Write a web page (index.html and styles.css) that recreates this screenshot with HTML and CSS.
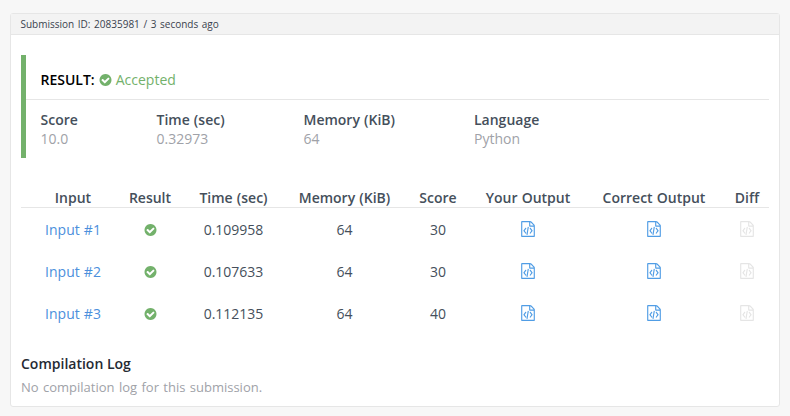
FILE: index.html
```html
<!DOCTYPE html>
<html lang="en">
<head>
<meta charset="utf-8">
<title>Submission</title>
<link rel="stylesheet" href="styles.css">
</head>
<body>
<svg class="sprite" aria-hidden="true">
  <symbol id="check" viewBox="128 128 1536 1536"><path d="M1412 734q0-28-18-46l-91-90q-19-19-45-19t-45 19l-408 407-226-226q-19-19-45-19t-45 19l-91 90q-18 18-18 46 0 27 18 45l362 362q19 19 45 19 27 0 46-19l543-543q18-18 18-45zm252 162q0 209-103 385.5t-279.5 279.5-385.5 103-385.5-103-279.5-279.5-103-385.5 103-385.5 279.5-279.5 385.5-103 385.5 103 279.5 279.5 103 385.5z"/></symbol>
  <symbol id="code" viewBox="0 0 1536 1792"><path d="M1468 380q28 28 48 76t20 88v1152q0 40-28 68t-68 28h-1344q-40 0-68-28t-28-68v-1600q0-40 28-68t68-28h896q40 0 88 20t76 48zm-444-244v376h376q-10-29-22-41l-313-313q-12-12-41-22zm384 1528v-1024h-416q-40 0-68-28t-28-68v-416h-768v1536h1280zM480 768q8-11 21-12.500t24 6.500l51 38q11 8 12.500 21t-6.500 24l-182 243 182 243q8 11 6.500 24t-12.500 21l-51 38q-11 8-24 6.500t-21-12.500l-226-301q-14-19 0-38zm802 301q14 19 0 38l-226 301q-8 11-21 12.500t-24-6.500l-51-38q-11-8-12.500-21t6.500-24l182-243-182-243q-8-11-6.500-24t12.500-21l51-38q11-8 24-6.500t21 12.500zm-662 481q-13-2-20.500-13t-5.500-24l138-831q2-13 13-20.500t24-5.500l63 10q13 2 20.500 13t5.500 24l-138 831q-2 13-13 20.500t-24 5.500z"/></symbol>
</svg>
<main class="panel">
  <header class="panel-head">Submission ID: 20835981 / 3 seconds ago</header>
  <div class="panel-body">
    <section class="summary">
      <div class="verdict"><span class="verdict-label">RESULT:</span><svg class="check"><use href="#check"/></svg><span class="accepted">Accepted</span></div>
      <dl class="stats">
        <div><dt>Score</dt><dd>10.0</dd></div>
        <div><dt>Time (sec)</dt><dd>0.32973</dd></div>
        <div><dt>Memory (KiB)</dt><dd>64</dd></div>
        <div><dt>Language</dt><dd>Python</dd></div>
      </dl>
    </section>
    <table class="tests">
      <colgroup><col class="c-input"><col class="c-result"><col class="c-time"><col class="c-memory"><col class="c-score"><col class="c-yours"><col class="c-correct"><col class="c-diff"></colgroup>
      <thead>
        <tr><th>Input</th><th>Result</th><th>Time (sec)</th><th>Memory (KiB)</th><th>Score</th><th>Your Output</th><th>Correct Output</th><th>Diff</th></tr>
      </thead>
      <tbody>
        <tr><td><a>Input #1</a></td><td><svg class="check"><use href="#check"/></svg></td><td>0.109958</td><td>64</td><td>30</td><td><svg class="code"><use href="#code"/></svg></td><td><svg class="code"><use href="#code"/></svg></td><td><svg class="code disabled"><use href="#code"/></svg></td></tr>
        <tr><td><a>Input #2</a></td><td><svg class="check"><use href="#check"/></svg></td><td>0.107633</td><td>64</td><td>30</td><td><svg class="code"><use href="#code"/></svg></td><td><svg class="code"><use href="#code"/></svg></td><td><svg class="code disabled"><use href="#code"/></svg></td></tr>
        <tr><td><a>Input #3</a></td><td><svg class="check"><use href="#check"/></svg></td><td>0.112135</td><td>64</td><td>40</td><td><svg class="code"><use href="#code"/></svg></td><td><svg class="code"><use href="#code"/></svg></td><td><svg class="code disabled"><use href="#code"/></svg></td></tr>
      </tbody>
    </table>
    <h2 class="log-title">Compilation Log</h2>
    <p class="log-text">No compilation log for this submission.</p>
  </div>
</main>
</body>
</html>
```
FILE: styles.css
```css
* { box-sizing: border-box; }
body {
  margin: 0;
  padding: 13px 10px 0;
  background: #f7f7f7;
  color: #454f5b;
  font: 14px/20px "Open Sans", sans-serif;
}
.sprite { display: none; }
.panel {
  height: 394px;
  border: 1px solid #e6e6e6;
  border-radius: 3px;
  background: #fff;
}
.panel-head {
  height: 21px;
  padding-left: 9.500px;
  border-bottom: 1px solid #e6e6e6;
  background: #f3f3f3;
  color: #39424e;
  font-size: 10px;
  line-height: 20px;
  word-spacing: 1px;
}
.panel-body { padding: 20px 10px 0; }
.summary {
  height: 103px;
  border-left: 5px solid #73b16b;
}
.verdict {
  display: flex;
  align-items: center;
  height: 45px;
  padding: 6px 0 0 14.500px;
  border-bottom: 1px solid #e6e6e6;
}
.verdict-label { color: #000; font-weight: 600; }
.check { display: block; width: 13px; height: 12px; fill: #73b16b; }
.verdict .check { margin: 0 4px 0 4px; }
.accepted { color: #73b16b; }
.stats {
  display: grid;
  grid-template-columns: 116px 147px 170.500px auto;
  margin: 0;
  padding: 10px 0 0 14.500px;
  line-height: 19px;
}
dt { color: #454f5b; font-weight: 600; word-spacing: 0.500px; }
dd { margin: 0; color: #a0a2a8; }
.tests {
  width: 748px;
  margin-top: 30px;
  border-collapse: separate;
  border-spacing: 0;
  table-layout: fixed;
}
.c-input { width: 104px; }
.c-result { width: 50px; }
.c-time { width: 117px; }
.c-memory { width: 105px; }
.c-score { width: 82px; }
.c-yours { width: 98px; }
.c-correct { width: 154px; }
.c-diff { width: 38px; }
th, td { padding: 0; text-align: center; white-space: nowrap; word-spacing: 0.500px; }
th { height: 20px; border-bottom: 1px solid #e6e6e6; font-weight: 600; line-height: 19px; }
td { height: 42px; padding-top: 2px; }
th:last-child, td:last-child { padding-right: 6px; }
td .check, td .code { margin: 0 auto; }
td .code { margin-bottom: 2px; }
a { color: #4c8fdc; }
.code { display: block; width: 14px; height: 16px; fill: #509de5; }
.disabled { fill: #e5e5e5; }
.log-title {
  margin: 20px 0 0;
  color: #252a33;
  font-size: 14px;
  font-weight: 600;
  line-height: 20px;
}
.log-text { margin: 3px 0 0; color: #a0a2a8; font-size: 13px; line-height: 20px; word-spacing: 1px; }
```
